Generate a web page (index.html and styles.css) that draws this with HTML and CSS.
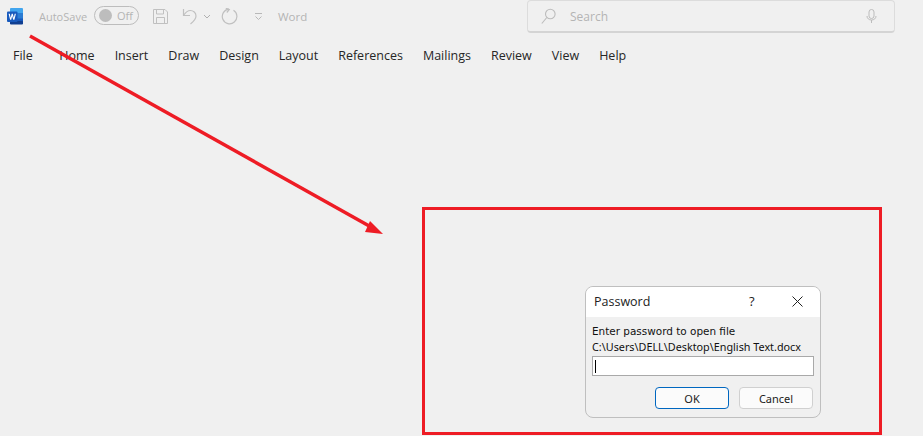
FILE: index.html
```html
<!DOCTYPE html>
<html lang="en">
<head>
    <meta charset="UTF-8">
    <meta name="viewport" content="width=device-width, initial-scale=1.0">
    <title>Password</title>
    <link rel="stylesheet" href="styles.css">
</head>
<body>
    <header class="titlebar">
        <svg class="word-logo" width="17" height="17" viewBox="0 0 17 17">
            <rect x="3" y="0" width="13" height="16" rx="1" fill="#41a5ee"/>
            <rect x="3" y="5" width="13" height="6" fill="#2b7cd3"/>
            <rect x="3" y="10.5" width="13" height="5.5" fill="#185abd"/>
            <rect x="3" y="13" width="13" height="3.5" rx="1" fill="#103f91"/>
            <rect x="0" y="3.5" width="10.5" height="10.5" rx="1" fill="#185abd"/>
            <path d="M1.6 5.8h1.2l.9 4 1-4h1.1l1 4 .9-4h1.2l-1.5 6H6.2l-1-3.9-1 3.9H3.100z" fill="#fff"/>
        </svg>
        <span class="autosave">AutoSave</span>
        <span class="toggle"><span class="toggle-knob"></span><span class="toggle-label">Off</span></span>
        <svg class="qat-save" width="17" height="17" viewBox="0 0 17 17" fill="none" stroke="#c0c0c0">
            <path d="M1.500 1.500h11.500l2.500 2.500v11.500h-14z"/>
            <path d="M4.500 1.500v4.500h7v-4.500M4.500 15.500v-6h8v6"/>
        </svg>
        <svg class="qat-undo" width="17" height="17" viewBox="0 0 17 17" fill="none" stroke="#c0c0c0" stroke-width="1.200">
            <path d="M1.500 1v6.500h6.500"/>
            <path d="M1.800 7c1.500-2.200 3.500-4.500 6.500-4.500 3 0 5.700 2.300 5.700 5.500 0 2.800-2.500 5.500-5.500 8"/>
        </svg>
        <svg class="qat-caret" width="8" height="5" viewBox="0 0 8 5" fill="none" stroke="#b0b0b0">
            <path d="M1 1l3 3 3-3"/>
        </svg>
        <svg class="qat-redo" width="17" height="17" viewBox="0 0 17 17" fill="none" stroke="#c0c0c0" stroke-width="1.200">
            <path d="M12.500 2.300a7.300 7.300 0 1 1-4.500-1.100"/>
            <path d="M4.800 .2l3.500 1.300-2.500 3"/>
        </svg>
        <svg class="qat-more" width="9" height="8" viewBox="0 0 9 8" fill="none" stroke="#b8b8b8">
            <path d="M1 .5h7M1.500 3.500l3 3 3-3"/>
        </svg>
        <span class="doc-name">Word</span>
        <div class="search">
            <svg width="15" height="17" viewBox="0 0 15 17" fill="none" stroke="#bcbcbc" stroke-width="1.100">
                <circle cx="9.300" cy="6" r="4.800"/>
                <path d="M5.800 9.500l-5 6"/>
            </svg>
            <span class="search-text">Search</span>
            <svg class="search-mic" width="11" height="15" viewBox="0 0 11 15" fill="none" stroke="#bcbcbc">
                <rect x="3" y=".5" width="5" height="9" rx="2.500"/>
                <path d="M1 7c0 2.500 2 4 4.500 4s4.500-1.500 4.500-4M5.500 11v3"/>
            </svg>
        </div>
    </header>

    <nav class="tabs">
        <a class="tab tab-file">File</a>
        <a class="tab">Home</a>
        <a class="tab">Insert</a>
        <a class="tab">Draw</a>
        <a class="tab">Design</a>
        <a class="tab">Layout</a>
        <a class="tab">References</a>
        <a class="tab">Mailings</a>
        <a class="tab">Review</a>
        <a class="tab">View</a>
        <a class="tab">Help</a>
    </nav>

    <svg class="arrow" width="923" height="436" viewBox="0 0 923 436">
        <path d="M30 36L371 227" stroke="#ee1c25" stroke-width="3.500" fill="none"/>
        <path d="M383 234L365 232L370 221z" fill="#ee1c25"/>
    </svg>

    <div class="highlight">
        <section class="dialog">
            <div class="dialog-title">
                <span class="dialog-name">Password</span>
                <span class="dialog-help">?</span>
                <svg class="dialog-close" width="11" height="11" viewBox="0 0 11 11" fill="none" stroke="#222">
                    <path d="M.5 .5l10 10M10.500 .5l-10 10"/>
                </svg>
            </div>
            <div class="dialog-body">
                <p class="dialog-text">Enter password to open file</p>
                <p class="dialog-text dialog-path">C:\Users\DELL\Desktop\English Text.docx</p>
                <div class="password-input"><span class="caret"></span></div>
                <div class="dialog-buttons">
                    <button class="button button-default">OK</button>
                    <button class="button">Cancel</button>
                </div>
            </div>
        </section>
    </div>
</body>
</html>
```

FILE: styles.css
```css
* {
    margin: 0;
    padding: 0;
    box-sizing: border-box;
}
html, body {
    height: 100%;
}
body {
    position: relative;
    overflow: hidden;
    background-color: #f0f0f0;
    font-family: "Open Sans", "Noto Sans", sans-serif;
    font-size: 12px;
}

.titlebar {
    display: flex;
    align-items: center;
    height: 33px;
    color: #b4b4b4;
}
.word-logo {
    margin-left: 7px;
}
.autosave {
    margin-left: 15px;
    width: 55px;
    font-size: 11px;
}
.toggle {
    display: flex;
    align-items: center;
    width: 45px;
    height: 19px;
    margin-top: -3px;
    padding-left: 4px;
    border: 1px solid #bdbdbd;
    border-radius: 10px;
}
.toggle-knob {
    width: 13px;
    height: 13px;
    border-radius: 50%;
    background-color: #bdbdbd;
}
.toggle-label {
    margin-left: 5px;
    font-size: 11px;
}
.qat-save {
    margin-left: 13px;
}
.qat-undo {
    margin-left: 13px;
}
.qat-caret {
    margin-left: 4px;
}
.qat-redo {
    margin-left: 10px;
}
.qat-more {
    margin-left: 16px;
}
.doc-name {
    margin-left: 15px;
    font-size: 11.500px;
}
.search {
    display: flex;
    align-items: center;
    width: 368px;
    height: 33px;
    margin: -1px 28px 0 auto;
    padding: 1px 17px 0 13px;
    border: 1px solid #dcdcdc;
    border-bottom: 2px solid #d4d4d4;
    border-radius: 4px;
}
.search-text {
    margin-left: 14px;
    font-size: 12px;
}
.search-mic {
    margin-left: auto;
}

.tabs {
    display: flex;
    gap: 20px;
    padding: 14px 0 0 13px;
}
.tab {
    color: #262626;
    font-size: 12.500px;
    line-height: 18px;
}
.tab-file {
    margin-right: 6.500px;
}

.arrow {
    position: absolute;
    top: 0;
    left: 0;
}

.highlight {
    position: absolute;
    top: 207px;
    left: 422px;
    width: 460px;
    height: 228px;
    border: 3px solid #ee1c25;
}

.dialog {
    position: absolute;
    top: 76px;
    left: 160px;
    width: 236px;
    height: 132px;
    overflow: hidden;
    border: 1px solid #bfbfbf;
    border-radius: 8px;
    background-color: #f0f0f0;
}
.dialog-title {
    display: flex;
    align-items: center;
    height: 30px;
    padding: 0 0 2px 8px;
    background-color: #ffffff;
}
.dialog-name {
    width: 155px;
    color: #222222;
    font-size: 12.500px;
}
.dialog-help {
    width: 43px;
    color: #222222;
    font-size: 13px;
}
.dialog-body {
    padding: 7px 6px 0;
}
.dialog-text {
    color: #111111;
    font-family: "DejaVu Sans", sans-serif;
    font-size: 10.450px;
    line-height: 15px;
}
.dialog-path {
    font-family: "Noto Sans", sans-serif;
    font-size: 10.800px;
    line-height: 16px;
}
.password-input {
    display: flex;
    align-items: center;
    height: 20px;
    margin-top: 1px;
    padding-left: 2px;
    border: 1px solid #a9a9a9;
    background-color: #ffffff;
}
.caret {
    width: 1px;
    height: 13px;
    background-color: #000000;
}
.dialog-buttons {
    display: flex;
    justify-content: flex-end;
    gap: 10px;
    margin-top: 11px;
    padding-right: 1px;
}
.button {
    width: 74px;
    height: 22px;
    border: 1px solid #d0d0d0;
    border-radius: 4px;
    background-color: #fbfbfb;
    color: #1a1a1a;
    font-family: "Noto Sans", sans-serif;
    font-size: 11px;
}
.button-default {
    border-color: #0067c0;
}
```
